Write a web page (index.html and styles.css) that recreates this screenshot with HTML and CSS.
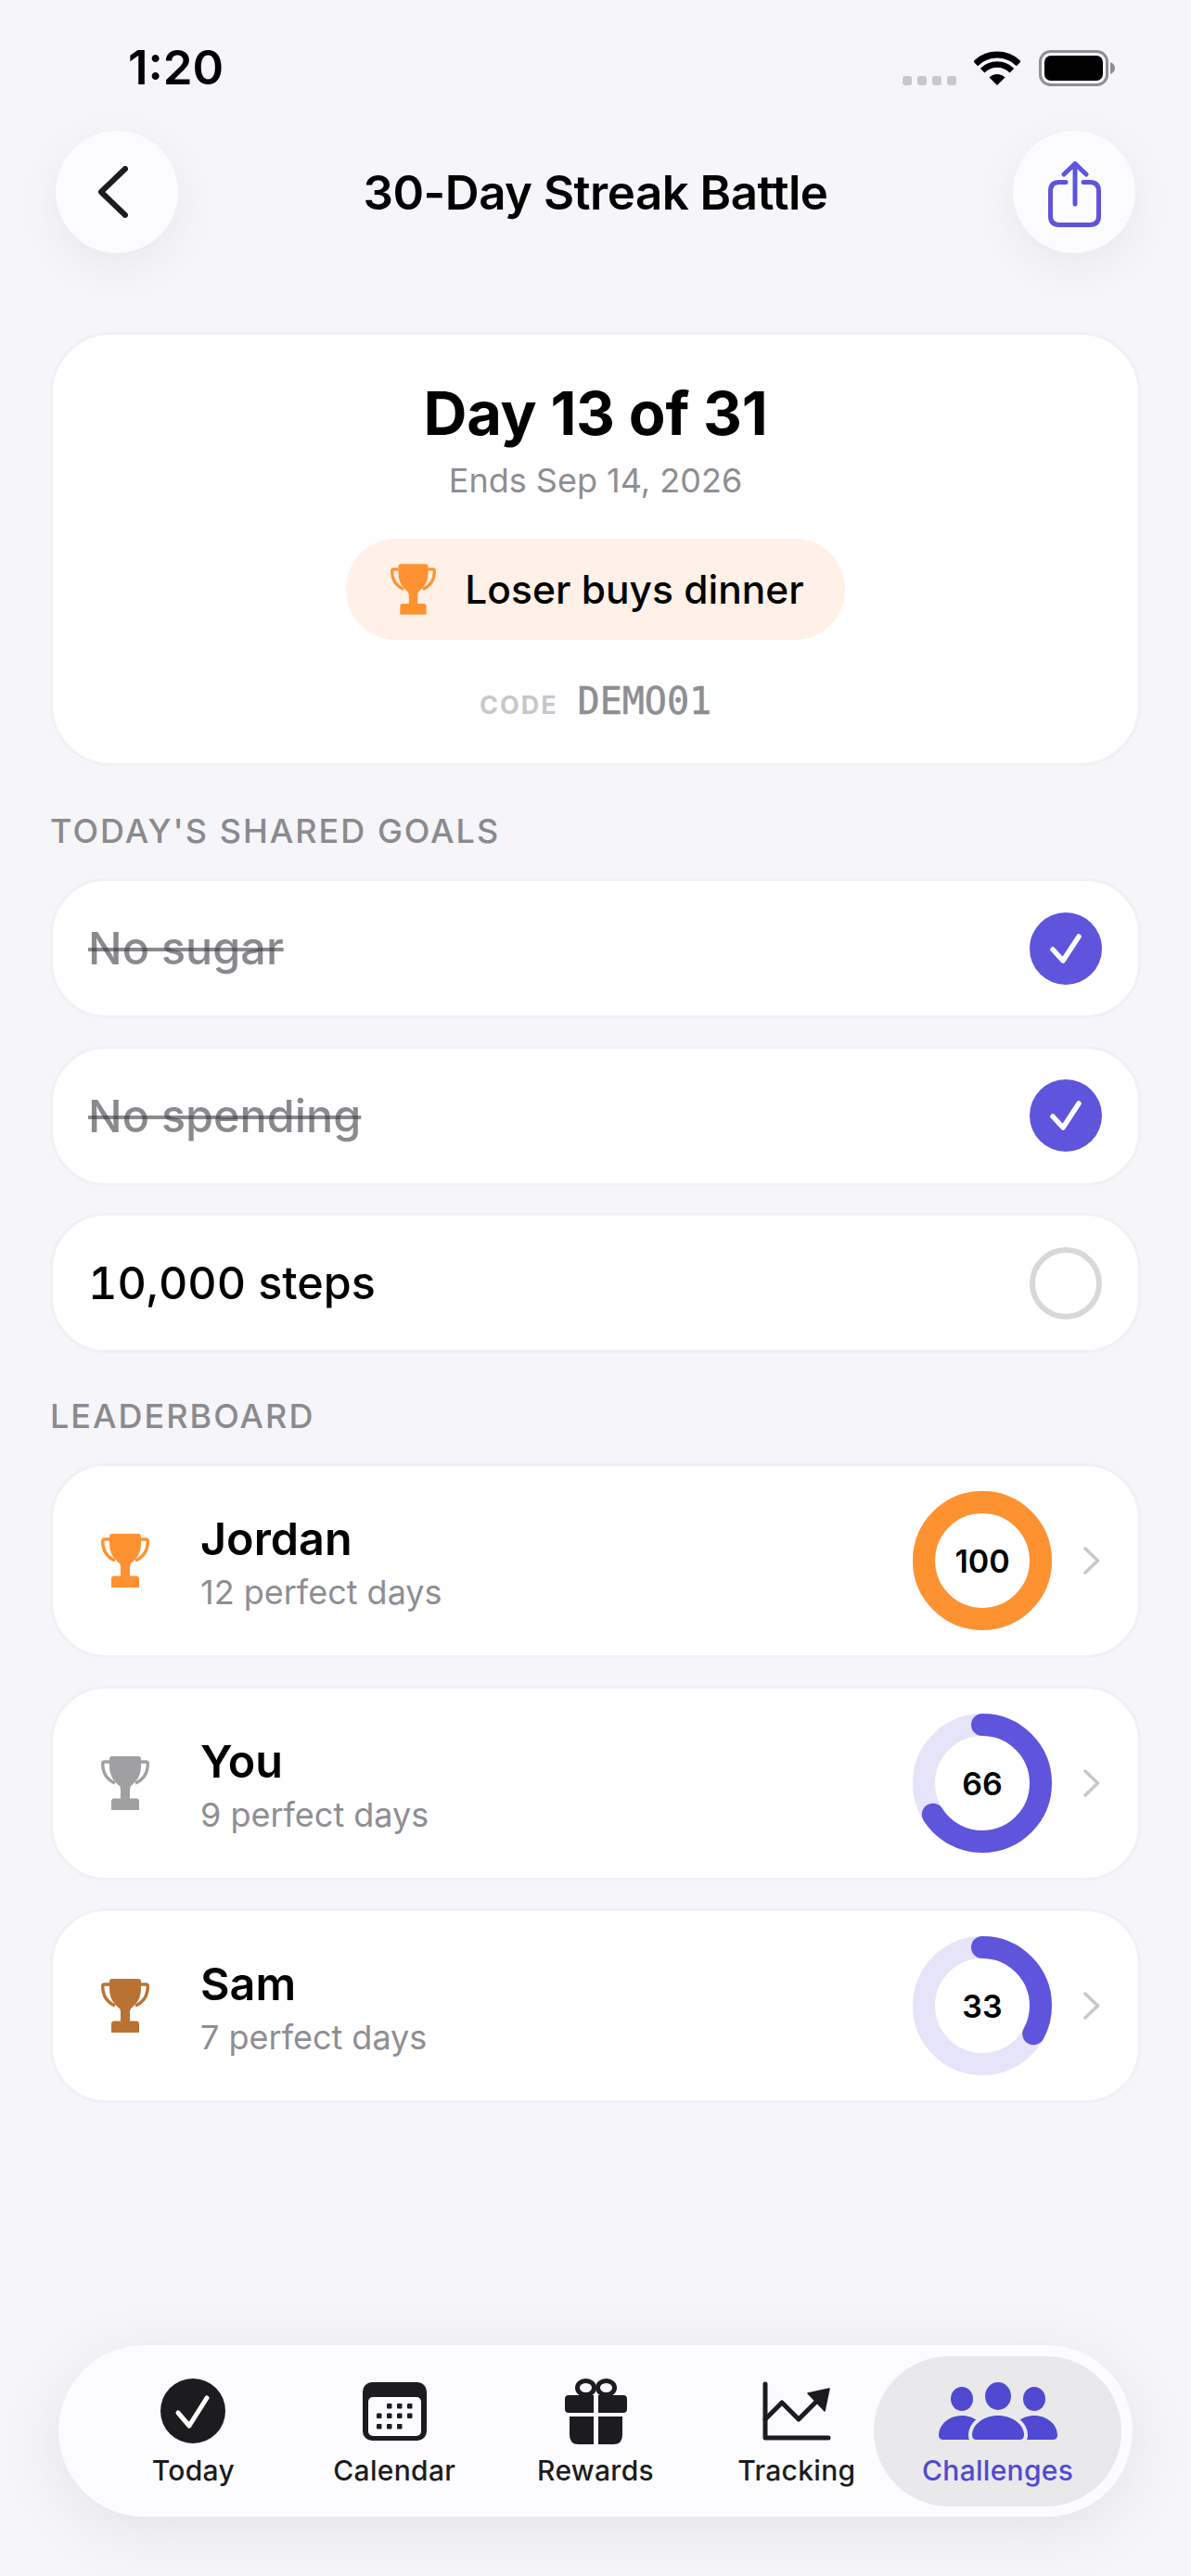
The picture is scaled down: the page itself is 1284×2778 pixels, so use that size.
FILE: index.html
```html
<!DOCTYPE html>
<html lang="en">
<head>
    <meta charset="UTF-8">
    <meta name="viewport" content="width=device-width, initial-scale=1.0">
    <title>30-Day Streak Battle</title>
    <link rel="stylesheet" href="styles.css">
</head>
<body>
    <svg class="defs" width="0" height="0">
        <symbol id="trophy" viewBox="0 0 52 58">
            <path d="M12 0H40Q43 0 43 3V11C43 22 37 28 32 32L31 35V46H21V35L20 32C15 28 9 22 9 11V3Q9 0 12 0Z" fill="currentColor"/>
            <path d="M9 6H3.5Q1.7 6 1.7 8C1.7 18 6 25 15 29M43 6H48.5Q50.3 6 50.3 8C50.3 18 46 25 37 29" fill="none" stroke="currentColor" stroke-width="3.4"/>
            <path d="M11 58V49Q11 45.5 14 45.5H38Q41 45.5 41 49V58Z" fill="currentColor"/>
        </symbol>
        <symbol id="tick" viewBox="0 0 78 78">
            <path d="M25 40L36 52L53 26" fill="none" stroke="#fff" stroke-width="5.5" stroke-linecap="round" stroke-linejoin="round"/>
        </symbol>
        <symbol id="chevron" viewBox="0 0 18 30">
            <path d="M2 2L15.5 15L2 28" fill="none" stroke="#c7c7cc" stroke-width="3.5" stroke-linecap="round" stroke-linejoin="round"/>
        </symbol>
    </svg>

    <div class="screen">
        <!-- Status bar -->
        <div class="status-bar">
            <span class="time">1:20</span>
            <div class="status-icons">
                <div class="signal"><span></span><span></span><span></span><span></span></div>
                <svg class="wifi" width="50" height="37" viewBox="0 0 50 37">
                    <path d="M1.7 13.7A33 33 0 0 1 48.3 13.7" fill="none" stroke="#000" stroke-width="7"/>
                    <path d="M9.1 21.1A22.5 22.5 0 0 1 40.9 21.1" fill="none" stroke="#000" stroke-width="6.5"/>
                    <path d="M25 37L16.5 28.5A12 12 0 0 1 33.5 28.5Z" fill="#000"/>
                </svg>
                <svg class="battery" width="82" height="39" viewBox="0 0 82 39">
                    <rect x="1.5" y="1.5" width="72" height="36" rx="11" fill="none" stroke="#8e8e93" stroke-width="3"/>
                    <rect x="6" y="6" width="63" height="27" rx="7" fill="#000"/>
                    <path d="M77 13Q82 15 82 19.5Q82 24 77 26Z" fill="#8e8e93"/>
                </svg>
            </div>
        </div>

        <!-- Header -->
        <header class="top-bar">
            <button class="round-btn">
                <svg class="back-icon" width="32" height="56" viewBox="0 0 32 56">
                    <path d="M29 3L3 28L29 53" fill="none" stroke="#1c1c1e" stroke-width="6" stroke-linecap="round" stroke-linejoin="round"/>
                </svg>
            </button>
            <h1 class="page-title">30-Day Streak Battle</h1>
            <button class="round-btn">
                <svg class="share-icon" width="57" height="72" viewBox="0 0 57 72">
                    <path d="M19 22.5H12Q2.5 22.5 2.5 32V59Q2.5 68.5 12 68.5H45Q54.5 68.5 54.5 59V32Q54.5 22.5 45 22.5H38" fill="none" stroke="#5e55dc" stroke-width="5" stroke-linecap="round"/>
                    <path d="M29 46V3M17 14L29 2.5L41 14" fill="none" stroke="#5e55dc" stroke-width="5" stroke-linecap="round" stroke-linejoin="round"/>
                </svg>
            </button>
        </header>

        <main class="content">
            <!-- Challenge summary -->
            <section class="hero-card">
                <div class="hero-day">Day 13 of 31</div>
                <div class="hero-ends">Ends Sep 14, 2026</div>
                <div class="stake-pill">
                    <svg class="stake-icon"><use href="#trophy"/></svg>
                    <span>Loser buys dinner</span>
                </div>
                <div class="code-row">
                    <span class="code-label">CODE</span>
                    <span class="code-value">DEMO01</span>
                </div>
            </section>

            <!-- Goals -->
            <h2 class="section-title goals-title">TODAY'S SHARED GOALS</h2>
            <div class="goal-list">
                <div class="card goal-row">
                    <span class="goal-name done">No sugar</span>
                    <svg class="goal-check"><use href="#tick"/></svg>
                </div>
                <div class="card goal-row">
                    <span class="goal-name done">No spending</span>
                    <svg class="goal-check"><use href="#tick"/></svg>
                </div>
                <div class="card goal-row">
                    <span class="goal-name">10,000 steps</span>
                    <span class="goal-empty"></span>
                </div>
            </div>

            <!-- Leaderboard -->
            <h2 class="section-title board-title">LEADERBOARD</h2>
            <div class="board-list">
                <div class="card board-row">
                    <svg class="medal gold"><use href="#trophy"/></svg>
                    <div class="player">
                        <div class="player-name">Jordan</div>
                        <div class="player-days">12 perfect days</div>
                    </div>
                    <div class="ring">
                        <svg width="150" height="150" viewBox="0 0 150 150">
                            <circle class="ring-track" cx="75" cy="75" r="63"/>
                            <circle class="ring-fill gold-fill" cx="75" cy="75" r="63" pathLength="100" stroke-dasharray="100 100" transform="rotate(-90 75 75)"/>
                        </svg>
                        <span class="ring-value">100</span>
                    </div>
                    <svg class="row-chevron"><use href="#chevron"/></svg>
                </div>
                <div class="card board-row">
                    <svg class="medal silver"><use href="#trophy"/></svg>
                    <div class="player">
                        <div class="player-name">You</div>
                        <div class="player-days">9 perfect days</div>
                    </div>
                    <div class="ring">
                        <svg width="150" height="150" viewBox="0 0 150 150">
                            <circle class="ring-track" cx="75" cy="75" r="63"/>
                            <circle class="ring-fill" cx="75" cy="75" r="63" pathLength="100" stroke-dasharray="66 100" transform="rotate(-90 75 75)"/>
                        </svg>
                        <span class="ring-value">66</span>
                    </div>
                    <svg class="row-chevron"><use href="#chevron"/></svg>
                </div>
                <div class="card board-row">
                    <svg class="medal bronze"><use href="#trophy"/></svg>
                    <div class="player">
                        <div class="player-name">Sam</div>
                        <div class="player-days">7 perfect days</div>
                    </div>
                    <div class="ring">
                        <svg width="150" height="150" viewBox="0 0 150 150">
                            <circle class="ring-track" cx="75" cy="75" r="63"/>
                            <circle class="ring-fill" cx="75" cy="75" r="63" pathLength="100" stroke-dasharray="33 100" transform="rotate(-90 75 75)"/>
                        </svg>
                        <span class="ring-value">33</span>
                    </div>
                    <svg class="row-chevron"><use href="#chevron"/></svg>
                </div>
            </div>
        </main>

        <!-- Tab bar -->
        <nav class="tab-bar">
            <div class="tab">
                <div class="tab-icon">
                    <svg width="70" height="70" viewBox="0 0 70 70">
                        <circle cx="35" cy="35" r="35" fill="#1c1c1e"/>
                        <path d="M19 37L31 51L50 21" fill="none" stroke="#fff" stroke-width="5" stroke-linecap="round" stroke-linejoin="round"/>
                    </svg>
                </div>
                <span class="tab-label">Today</span>
            </div>
            <div class="tab">
                <div class="tab-icon">
                    <svg width="69" height="63" viewBox="0 0 69 63">
                        <rect width="69" height="63" rx="10" fill="#1c1c1e"/>
                        <rect x="6" y="16" width="57" height="42" rx="5" fill="#fcfcfe"/>
                        <g fill="#1c1c1e">
                            <rect x="26" y="23" width="5.5" height="5.5" rx="1"/>
                            <rect x="37" y="23" width="5.5" height="5.5" rx="1"/>
                            <rect x="48" y="23" width="5.5" height="5.5" rx="1"/>
                            <rect x="15" y="33.5" width="5.5" height="5.5" rx="1"/>
                            <rect x="26" y="33.5" width="5.5" height="5.5" rx="1"/>
                            <rect x="37" y="33.5" width="5.5" height="5.5" rx="1"/>
                            <rect x="48" y="33.5" width="5.5" height="5.5" rx="1"/>
                            <rect x="15" y="45" width="5.5" height="5.5" rx="1"/>
                            <rect x="26" y="45" width="5.5" height="5.5" rx="1"/>
                            <rect x="37" y="45" width="5.5" height="5.5" rx="1"/>
                        </g>
                    </svg>
                </div>
                <span class="tab-label">Calendar</span>
            </div>
            <div class="tab">
                <div class="tab-icon">
                    <svg width="67" height="71" viewBox="0 0 67 71">
                        <ellipse cx="22.5" cy="10" rx="9" ry="7.5" fill="none" stroke="#1c1c1e" stroke-width="5"/>
                        <ellipse cx="44.5" cy="10" rx="9" ry="7.5" fill="none" stroke="#1c1c1e" stroke-width="5"/>
                        <path d="M4 18H31V37H4Q0 37 0 33V22Q0 18 4 18ZM36 18H63Q67 18 67 22V33Q67 37 63 37H36Z" fill="#1c1c1e"/>
                        <path d="M5 41H31V71H15Q5 71 5 61ZM36 41H62V61Q62 71 52 71H36Z" fill="#1c1c1e"/>
                    </svg>
                </div>
                <span class="tab-label">Rewards</span>
            </div>
            <div class="tab">
                <div class="tab-icon">
                    <svg width="74" height="64" viewBox="0 0 74 64">
                        <path d="M3 3V61H71" fill="none" stroke="#1c1c1e" stroke-width="5" stroke-linecap="round" stroke-linejoin="round"/>
                        <path d="M3 41L21 23L39 41L60 20" fill="none" stroke="#1c1c1e" stroke-width="5" stroke-linecap="round" stroke-linejoin="round"/>
                        <path d="M72 8L49 13L67 32Z" fill="#1c1c1e" stroke="#1c1c1e" stroke-width="1.5" stroke-linejoin="round"/>
                    </svg>
                </div>
                <span class="tab-label">Tracking</span>
            </div>
            <div class="tab active">
                <div class="tab-icon">
                    <svg width="128" height="62" viewBox="0 0 128 62">
                        <ellipse cx="64" cy="15" rx="14" ry="15" fill="#5049d1"/>
                        <ellipse cx="25" cy="18" rx="12" ry="13" fill="#5049d1"/>
                        <ellipse cx="103" cy="18" rx="12" ry="13" fill="#5049d1"/>
                        <path d="M0 57C0 45 12 36 25 36C38 36 50 45 50 57V62H5Q0 62 0 57ZM128 57C128 45 116 36 103 36C90 36 78 45 78 57V62H123Q128 62 128 57Z" fill="#5049d1"/>
                        <path d="M36 57C36 46 48 36 64 36C80 36 92 46 92 57Q92 62 87 62H41Q36 62 36 57Z" fill="#5049d1" stroke="#e9e9eb" stroke-width="8" paint-order="stroke"/>
                    </svg>
                </div>
                <span class="tab-label">Challenges</span>
            </div>
        </nav>
    </div>
</body>
</html>
```

FILE: styles.css
```css
* {
    box-sizing: border-box;
}
html, body {
    margin: 0;
    padding: 0;
}
body {
    font-family: Inter, "Noto Sans", sans-serif;
    background-color: #f5f5fa;
    color: #000;
}
.defs {
    display: block;
    height: 0;
}
.screen {
    display: flex;
    flex-direction: column;
    width: 1284px;
    height: 2778px;
    overflow: hidden;
}

/* Status bar */
.status-bar {
    display: flex;
    justify-content: space-between;
    height: 141px;
    padding: 42px 82px 0 138px;
}
.time {
    font-size: 51px;
    font-weight: 600;
    line-height: 62px;
}
.status-icons {
    display: flex;
    align-items: flex-start;
    padding-top: 12px;
}
.signal {
    display: flex;
    gap: 6px;
    margin: 28px 19px 0 0;
}
.signal span {
    width: 10px;
    height: 10px;
    border-radius: 3px;
    background-color: #c7c7cc;
}
.wifi {
    margin: 1px 20px 0 0;
}

/* Header */
.top-bar {
    display: flex;
    justify-content: space-between;
    align-items: center;
    height: 132px;
    padding: 0 60px;
}
.round-btn {
    display: flex;
    justify-content: center;
    align-items: center;
    width: 132px;
    height: 132px;
    padding: 0;
    border: none;
    border-radius: 50%;
    background-color: #fcfcfe;
    box-shadow: 0 14px 48px rgba(0, 0, 0, 0.06);
}
.back-icon {
    margin-right: 8px;
}
.share-icon {
    margin-top: 5px;
}
.page-title {
    margin: 2px 0 0;
    font-size: 51px;
    font-weight: 600;
    line-height: 62px;
    letter-spacing: -0.5px;
}

/* Content */
.content {
    padding: 85px 54px 0;
}
.card, .hero-card {
    border: 3px solid #f1f1f4;
    background-color: #fff;
}
.hero-card {
    display: flex;
    flex-direction: column;
    align-items: center;
    height: 468px;
    padding-top: 45px;
    border-radius: 66px;
}
.hero-day {
    font-size: 65px;
    font-weight: 700;
    line-height: 80px;
    letter-spacing: -0.3px;
}
.hero-ends {
    margin-top: 10px;
    font-size: 36px;
    line-height: 44px;
    color: #8e8e93;
}
.stake-pill {
    display: flex;
    align-items: center;
    gap: 31px;
    height: 109px;
    margin-top: 41px;
    padding: 0 44px 0 48px;
    border-radius: 54px;
    background-color: #fff1e7;
    font-size: 42.5px;
    font-weight: 450;
}
.stake-icon {
    width: 49px;
    height: 55px;
    color: #ff9230;
}
.code-row {
    display: flex;
    align-items: baseline;
    gap: 21px;
    margin-top: 43px;
}
.code-label {
    font-size: 27px;
    font-weight: 700;
    letter-spacing: 2px;
    color: #c7c7cc;
}
.code-value {
    font-family: "DejaVu Sans Mono", "Liberation Mono", monospace;
    font-size: 40px;
    color: #8e8e93;
    -webkit-text-stroke: 0.6px #8e8e93;
}

.section-title {
    margin: 0 0 29px;
    font-size: 36px;
    font-weight: 500;
    line-height: 44px;
    letter-spacing: 2px;
    color: #8a8a8e;
}
.goals-title {
    margin-top: 48px;
}
.board-title {
    margin-top: 46px;
}

/* Goals */
.goal-list {
    display: flex;
    flex-direction: column;
    gap: 29.5px;
}
.goal-row {
    display: flex;
    justify-content: space-between;
    align-items: center;
    height: 151px;
    padding: 0 39px 0 38px;
    border-radius: 60px;
}
.goal-name {
    font-size: 48.5px;
    font-weight: 450;
    font-variant-numeric: tabular-nums;
}
.goal-name.done {
    color: rgba(60, 60, 67, 0.6);
    text-decoration: line-through;
}
.goal-check {
    width: 78px;
    height: 78px;
    border-radius: 50%;
    background-color: #5e55dc;
}
.goal-empty {
    width: 78px;
    height: 78px;
    border: 6px solid #d8d8da;
    border-radius: 50%;
}

/* Leaderboard */
.board-list {
    display: flex;
    flex-direction: column;
    gap: 30px;
}
.board-row {
    display: flex;
    align-items: center;
    height: 210px;
    padding: 0 41px 0 52px;
    border-radius: 60px;
}
.medal {
    flex-shrink: 0;
    width: 52px;
    height: 58px;
    margin-right: 55px;
}
.gold {
    color: #ff9230;
}
.silver {
    color: #a0a0a2;
}
.bronze {
    color: #b87333;
}
.player {
    flex: 1;
    padding-top: 3px;
}
.player-name {
    font-size: 48.5px;
    font-weight: 600;
    line-height: 60px;
}
.player-days {
    margin-top: 5px;
    font-size: 36px;
    line-height: 44px;
    color: #8e8e93;
}
.ring {
    display: grid;
    place-items: center;
    width: 150px;
    height: 150px;
    margin-right: 34px;
}
.ring svg, .ring-value {
    grid-area: 1 / 1;
}
.ring-track, .ring-fill {
    fill: none;
    stroke-width: 24;
}
.ring-track {
    stroke: #e6e4f8;
}
.ring-fill {
    stroke: #5e55dc;
    stroke-linecap: round;
}
.ring-fill.gold-fill {
    stroke: #ff9230;
}
.ring-value {
    font-size: 34px;
    font-weight: 600;
}
.row-chevron {
    width: 18px;
    height: 30px;
}

/* Tab bar */
.tab-bar {
    display: flex;
    flex-shrink: 0;
    height: 185px;
    margin: auto 63px 64px;
    padding: 12px 12px 11px 37px;
    border-radius: 93px;
    background-color: #fcfcfe;
    box-shadow: 0 14px 70px rgba(0, 0, 0, 0.08);
}
.tab {
    display: flex;
    flex-direction: column;
    align-items: center;
    width: 217px;
    padding-top: 22px;
}
.tab.active {
    width: 267px;
    margin-left: -25px;
    border-radius: 81px;
    background-color: #e9e9eb;
}
.tab-icon {
    display: flex;
    justify-content: center;
    align-items: center;
    height: 74px;
}
.tab-label {
    margin-top: 9px;
    font-size: 30px;
    font-weight: 450;
    line-height: 36px;
    letter-spacing: 0.3px;
    color: #1c1c1e;
}
.tab.active .tab-label {
    font-weight: 500;
    color: #5049d1;
}
```
